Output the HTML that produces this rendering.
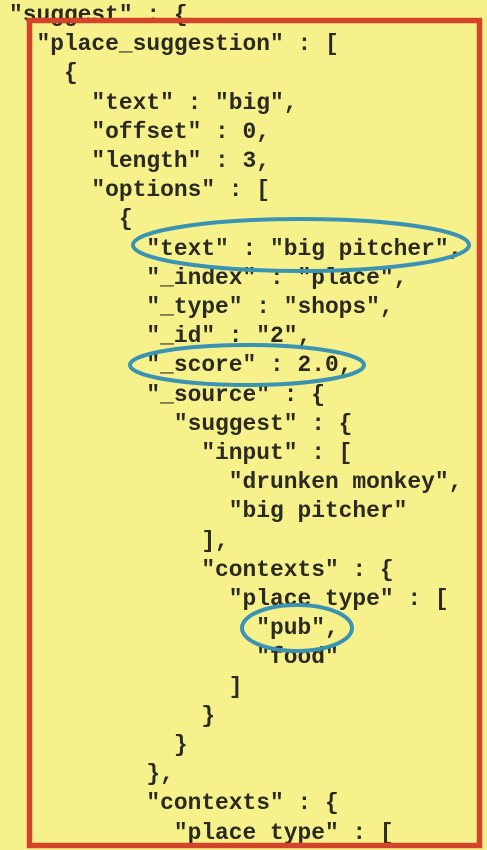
<!DOCTYPE html>
<html><head><meta charset="utf-8"><style>
html,body{margin:0;padding:0;}
body{width:487px;height:850px;overflow:hidden;background:#f7f18b;position:relative;}
pre{position:absolute;left:9px;top:1px;margin:0;font-family:"Liberation Mono",monospace;font-size:22.9px;line-height:29.2px;font-weight:bold;color:#2a2a22;letter-spacing:0;}
svg{position:absolute;left:0;top:0;}
</style></head><body>
<pre>"suggest" : {
  "place_suggestion" : [
    {
      "text" : "big",
      "offset" : 0,
      "length" : 3,
      "options" : [
        {
          "text" : "big pitcher",
          "_index" : "place",
          "_type" : "shops",
          "_id" : "2",
          "_score" : 2.0,
          "_source" : {
            "suggest" : {
              "input" : [
                "drunken monkey",
                "big pitcher"
              ],
              "contexts" : {
                "place_type" : [
                  "pub",
                  "food"
                ]
              }
            }
          },
          "contexts" : {
            "place type" : [</pre>
<svg width="487" height="850">
<rect x="29.5" y="20.5" width="450" height="825" fill="none" stroke="#d4442a" stroke-width="5.5"/>
<g fill="none" stroke="#3a93b3" stroke-width="4">
<ellipse cx="301" cy="245" rx="168" ry="26"/>
<ellipse cx="247" cy="365" rx="117" ry="20"/>
<ellipse cx="297" cy="628" rx="55" ry="23"/>
</g>
</svg>
</body></html>
